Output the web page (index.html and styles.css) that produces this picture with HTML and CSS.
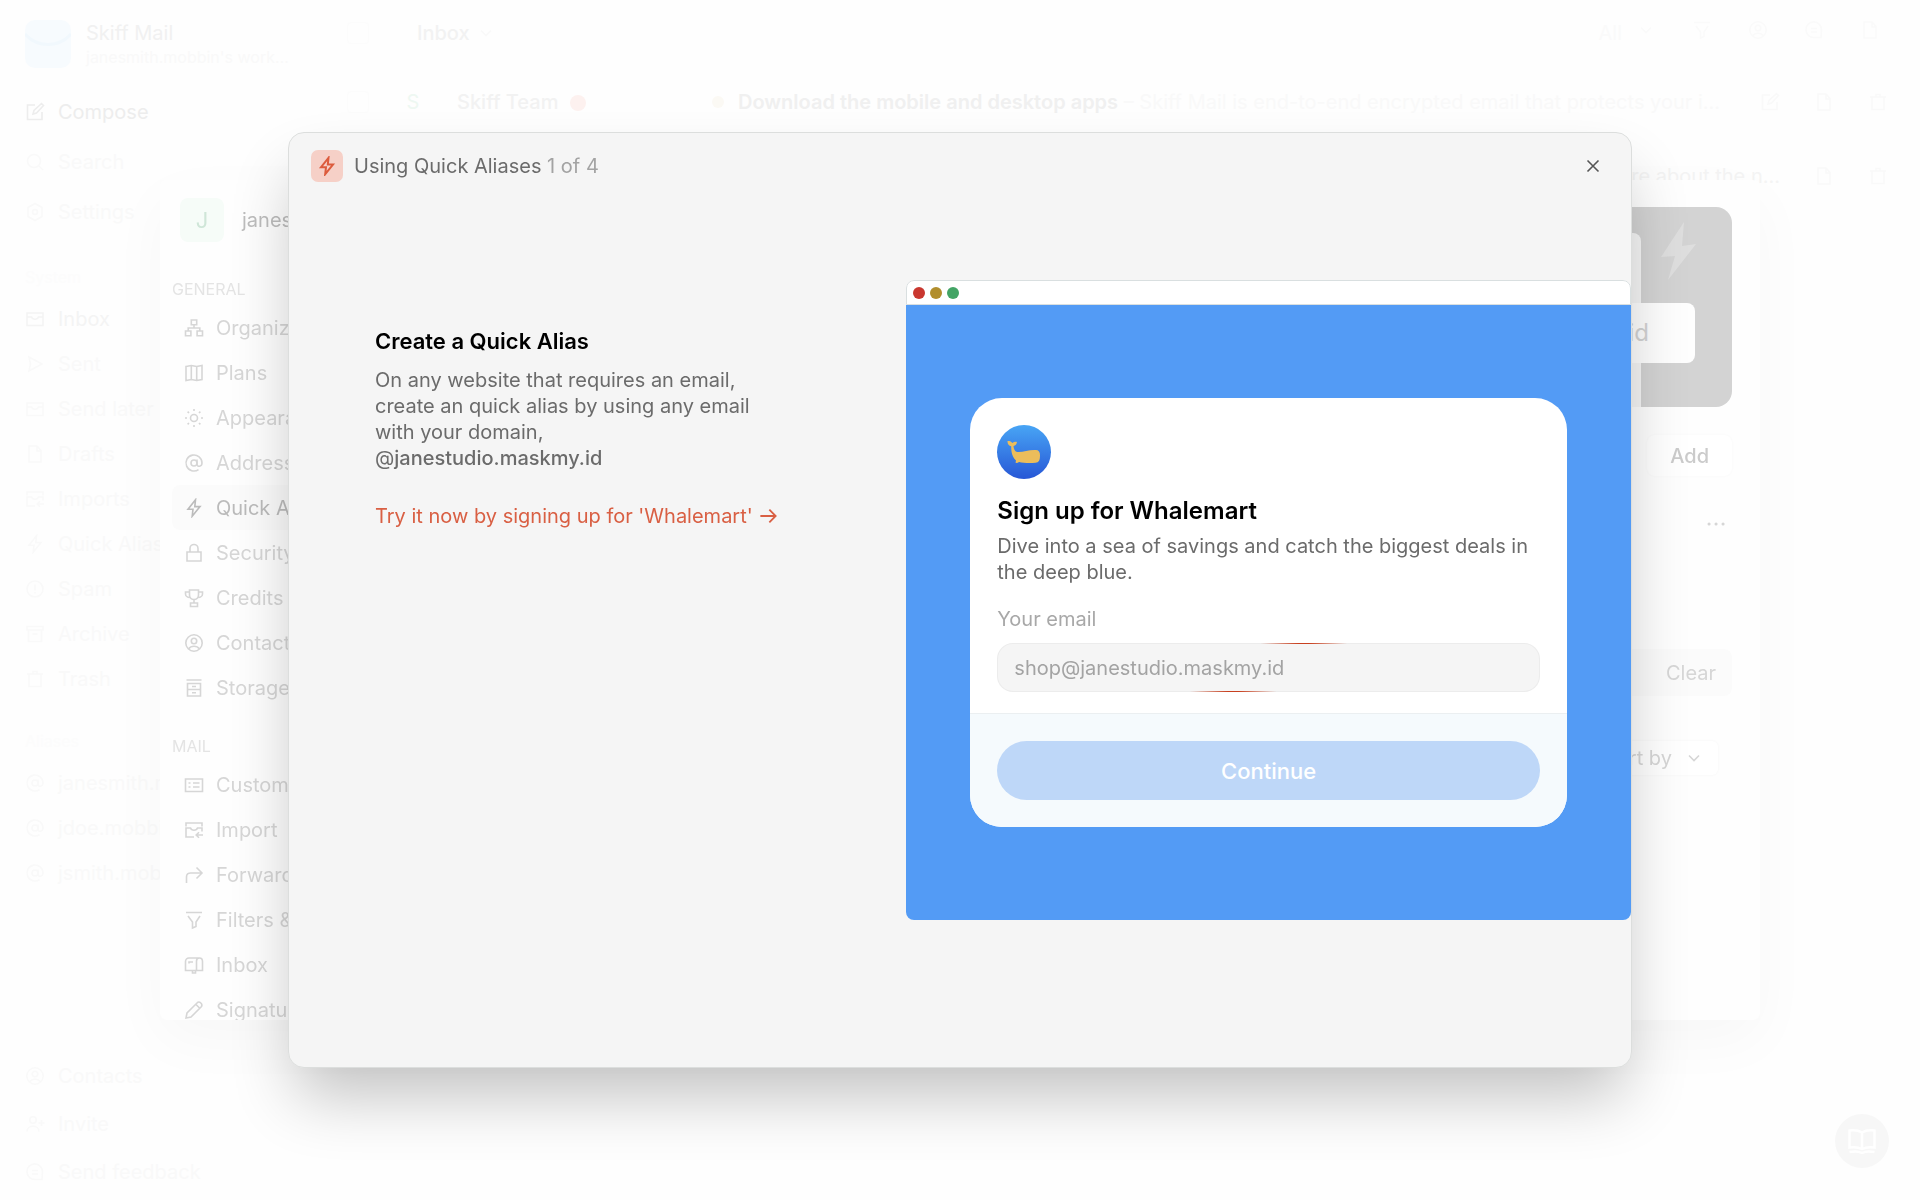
FILE: index.html
```html
<!DOCTYPE html>
<html lang="en">
<head>
    <meta charset="UTF-8">
    <meta name="viewport" content="width=device-width, initial-scale=1.0">
    <title>Skiff Mail</title>
    <link rel="stylesheet" href="styles.css">
</head>
<body>
    <!-- icon sprite -->
    <svg class="sprite" aria-hidden="true">
        <symbol id="i-bolt" viewBox="0 0 20 20"><path d="M11.500 1.800 4 11.200h5L8.200 18.200 16 8.600h-5.200z"/></symbol>
        <symbol id="i-compose" viewBox="0 0 20 20"><path d="M10 3H2.500v14.500H17V10M8 12l1-3.500 7.500-7 2 2-7 7.500z"/></symbol>
        <symbol id="i-search" viewBox="0 0 20 20"><circle cx="9" cy="9" r="6.500"/><path d="m14 14 4 4"/></symbol>
        <symbol id="i-gear" viewBox="0 0 20 20"><path d="m10 1.500 7 4v9l-7 4-7-4v-9z"/><circle cx="10" cy="10" r="2.500"/></symbol>
        <symbol id="i-inbox" viewBox="0 0 20 20"><path d="M2 7.500V4h16v3.500M2 8h4.500c1 3 6 3 7 0H18v8.500H2z"/></symbol>
        <symbol id="i-send" viewBox="0 0 20 20"><path d="m4 3 13 7-13 7 1.500-7z"/></symbol>
        <symbol id="i-file" viewBox="0 0 20 20"><path d="M4 2h8l4 4.500V18H4zM12 2v5h4"/></symbol>
        <symbol id="i-import" viewBox="0 0 20 20"><path d="M2 6.500V3h16v3.500M10 17H2V8h4.500c1 3 6 3 7 0H18v3.500M19 15h-6.500M15 12.200 12.200 15l2.800 2.800"/></symbol>
        <symbol id="i-spam" viewBox="0 0 20 20"><circle cx="10" cy="10" r="8"/><path d="M10 5.500v6M10 13v1.500"/></symbol>
        <symbol id="i-archive" viewBox="0 0 20 20"><path d="M2 2.500h16V6H2zM3.500 6v11.500h13V6M7.500 10h5"/></symbol>
        <symbol id="i-trash" viewBox="0 0 20 20"><path d="M2 5h16M4 5v12.500h12V5M8 5V2.500h4V5"/></symbol>
        <symbol id="i-at" viewBox="0 0 20 20"><circle cx="10" cy="10" r="3"/><path d="M13 6.500V11c0 3.200 5 3 5-1a8 8 0 1 0-3.500 6.600"/></symbol>
        <symbol id="i-user" viewBox="0 0 20 20"><circle cx="10" cy="10" r="8.200"/><circle cx="10" cy="8" r="2.700"/><path d="M4.500 16c2.500-3.600 8.500-3.600 11 0"/></symbol>
        <symbol id="i-invite" viewBox="0 0 20 20"><circle cx="8" cy="6" r="3.200"/><path d="M2 17.500c0-7 12-7 12 0M16.500 6v6M13.500 9h6"/></symbol>
        <symbol id="i-chat" viewBox="0 0 20 20"><path d="M17 17.500h-7A7.800 7.800 0 1 1 17.500 10zM7 8.500h6M7 12h6"/></symbol>
        <symbol id="i-org" viewBox="0 0 20 20"><path d="M7.300 2h5.400v4.800H7.300zM1.500 13h5.400v4.800H1.500zM13.100 13h5.400v4.800h-5.400zM10 7v3M4.200 13v-3h11.600v3"/></symbol>
        <symbol id="i-map" viewBox="0 0 20 20"><path d="m2 3.500 5.300-1 5.400 1 5.300-1v14l-5.300 1-5.400-1-5.300 1zM7.300 2.500v14M12.700 3.500v14"/></symbol>
        <symbol id="i-sun" viewBox="0 0 20 20"><circle cx="10" cy="10" r="3.500"/><path d="M10 1v2M10 17v2M1 10h2M17 10h2M3.600 3.600 5 5M15 15l1.400 1.400M3.600 16.400 5 15M15 5l1.400-1.400"/></symbol>
        <symbol id="i-lock" viewBox="0 0 20 20"><path d="M3 9h14v9H3zM6 9V5.500a4 4 0 0 1 8 0V9"/></symbol>
        <symbol id="i-trophy" viewBox="0 0 20 20"><path d="M5.500 2h9v5c0 6-9 6-9 0zM5.500 4H1.500v2c0 2 2 3.500 4.200 3.500M14.500 4h4v2c0 2-2 3.500-4.200 3.500M10 11.500V15M6.500 15h7v3.500h-7z"/></symbol>
        <symbol id="i-storage" viewBox="0 0 20 20"><path d="M2.500 2h15M3.500 5.500h13V18h-13zM3.500 11.500h13M8 8.500h4M8 14.800h4"/></symbol>
        <symbol id="i-domain" viewBox="0 0 20 20"><path d="M1.500 4h17v12.500h-17zM4.500 8h2M4.500 12h2M9 8h6.500M9 12h6.500"/></symbol>
        <symbol id="i-forward" viewBox="0 0 20 20"><path d="M2.500 18v-6c0-2.500 1.500-4 4-4h11M12.500 2.500 18 8l-5.500 5.500"/></symbol>
        <symbol id="i-filter" viewBox="0 0 20 20"><path d="M2 2.500h16M4 6l4.500 6v6l3.500-1.500V12L16 6"/></symbol>
        <symbol id="i-mailbox" viewBox="0 0 20 20"><path d="M5 3h10.500c2 0 3 1.500 3 3.500v9h-17v-9C1.500 4.500 3 3 5 3zM12.500 15.500V6c0-2 1-3 3-3M5 8.500V7h4M8.500 15.500V18h3v-2.500"/></symbol>
        <symbol id="i-pencil" viewBox="0 0 20 20"><path d="m2 18 1-5L13.500 2.500c2-1.500 5.500 1.500 4 4L7 17zM12 4.500l3.500 3.500"/></symbol>
        <symbol id="i-down" viewBox="0 0 20 20"><path d="m5 7.500 5 5 5-5"/></symbol>
        <symbol id="i-close" viewBox="0 0 20 20"><path d="m4.500 4.500 11 11M15.500 4.500l-11 11"/></symbol>
        <symbol id="i-arrow" viewBox="0 0 20 20"><path d="M1.500 10h17M11.500 3l7 7-7 7"/></symbol>
        <symbol id="i-dots" viewBox="0 0 20 20"><path d="M3 10h.1M10 10h.1M17 10h.1"/></symbol>
        <symbol id="i-book" viewBox="0 0 28 26"><path d="M14 4.500C10 2 6 2 1.500 2.500v17C6 19 10 19 14 21c4-2 8-2 12.500-1.500v-17C22 2 18 2 14 4.500zM14 4.500V20M1.500 24c5-1 9-1 12.500 1 3.500-2 7.500-2 12.500-1"/></symbol>
    </svg>

    <!-- mail app -->
    <div class="app">
        <aside class="sidebar">
            <div class="brand">
                <svg class="brand-logo" viewBox="0 0 46 48"><rect width="46" height="48" rx="10" fill="#f7fbfe"/><path d="M0 14c12 14 34 14 46 0" fill="none" stroke="#f1f8fd" stroke-width="3"/></svg>
                <div>
                    <div class="brand-name">Skiff Mail</div>
                    <div class="brand-sub">janesmith.mobbin's work…</div>
                </div>
            </div>
            <nav class="nav nav-top">
                <a href="#" class="compose"><svg class="icon"><use href="#i-compose"/></svg>Compose</a>
                <a href="#"><svg class="icon"><use href="#i-search"/></svg>Search</a>
                <a href="#"><svg class="icon"><use href="#i-gear"/></svg>Settings</a>
            </nav>
            <nav class="nav">
                <div class="nav-label">System</div>
                <a href="#" class="current"><svg class="icon"><use href="#i-inbox"/></svg>Inbox</a>
                <a href="#"><svg class="icon"><use href="#i-send"/></svg>Sent</a>
                <a href="#"><svg class="icon"><use href="#i-inbox"/></svg>Send later</a>
                <a href="#"><svg class="icon"><use href="#i-file"/></svg>Drafts</a>
                <a href="#"><svg class="icon"><use href="#i-import"/></svg>Imports</a>
                <a href="#"><svg class="icon"><use href="#i-bolt"/></svg>Quick Aliases</a>
                <a href="#"><svg class="icon"><use href="#i-spam"/></svg>Spam</a>
                <a href="#"><svg class="icon"><use href="#i-archive"/></svg>Archive</a>
                <a href="#"><svg class="icon"><use href="#i-trash"/></svg>Trash</a>
            </nav>
            <nav class="nav">
                <div class="nav-label">Aliases</div>
                <a href="#"><svg class="icon"><use href="#i-at"/></svg>janesmith.mobbin</a>
                <a href="#"><svg class="icon"><use href="#i-at"/></svg>jdoe.mobbin</a>
                <a href="#"><svg class="icon"><use href="#i-at"/></svg>jsmith.mobbin</a>
            </nav>
            <nav class="nav nav-bottom">
                <a href="#"><svg class="icon"><use href="#i-user"/></svg>Contacts</a>
                <a href="#"><svg class="icon"><use href="#i-invite"/></svg>Invite</a>
                <a href="#"><svg class="icon"><use href="#i-chat"/></svg>Send feedback</a>
            </nav>
        </aside>

        <main class="mail">
            <header class="mail-head">
                <input type="checkbox" class="check" aria-label="Select all">
                <h1>Inbox</h1>
                <svg class="icon"><use href="#i-down"/></svg>
                <div class="mail-tools">
                    <span>All</span>
                    <svg class="icon"><use href="#i-down"/></svg>
                    <svg class="icon"><use href="#i-filter"/></svg>
                    <svg class="icon"><use href="#i-user"/></svg>
                    <svg class="icon"><use href="#i-chat"/></svg>
                    <svg class="icon"><use href="#i-file"/></svg>
                </div>
            </header>
            <div class="mail-row">
                <input type="checkbox" class="check" aria-label="Select thread">
                <span class="mail-avatar">S</span>
                <span class="mail-from">Skiff Team <i class="badge"></i></span>
                <i class="unread"></i>
                <span class="mail-subject"><b>Download the mobile and desktop apps</b> – Skiff Mail is end-to-end encrypted email that protects your inbox and private data</span>
                <svg class="icon"><use href="#i-compose"/></svg>
                <svg class="icon"><use href="#i-file"/></svg>
                <svg class="icon"><use href="#i-trash"/></svg>
            </div>
            <div class="mail-row">
                <span class="mail-subject short">more about the n…</span>
                <svg class="icon"><use href="#i-file"/></svg>
                <svg class="icon"><use href="#i-trash"/></svg>
            </div>
        </main>
    </div>

    <!-- settings -->
    <div class="settings">
        <aside class="settings-side">
            <div class="profile"><span class="avatar">J</span>janesmith</div>
            <div class="group">General</div>
            <a href="#"><svg class="icon"><use href="#i-org"/></svg>Organization</a>
            <a href="#"><svg class="icon"><use href="#i-map"/></svg>Plans</a>
            <a href="#"><svg class="icon"><use href="#i-sun"/></svg>Appearance</a>
            <a href="#"><svg class="icon"><use href="#i-at"/></svg>Addresses</a>
            <a href="#" class="active"><svg class="icon"><use href="#i-bolt"/></svg>Quick Aliases</a>
            <a href="#"><svg class="icon"><use href="#i-lock"/></svg>Security</a>
            <a href="#"><svg class="icon"><use href="#i-trophy"/></svg>Credits</a>
            <a href="#"><svg class="icon"><use href="#i-user"/></svg>Contacts</a>
            <a href="#"><svg class="icon"><use href="#i-storage"/></svg>Storage</a>
            <div class="group">Mail</div>
            <a href="#"><svg class="icon"><use href="#i-domain"/></svg>Custom domains</a>
            <a href="#"><svg class="icon"><use href="#i-import"/></svg>Import</a>
            <a href="#"><svg class="icon"><use href="#i-forward"/></svg>Forward</a>
            <a href="#"><svg class="icon"><use href="#i-filter"/></svg>Filters &amp; rules</a>
            <a href="#"><svg class="icon"><use href="#i-mailbox"/></svg>Inbox</a>
            <a href="#"><svg class="icon"><use href="#i-pencil"/></svg>Signature</a>
        </aside>
        <section class="settings-main">
            <div class="banner">
                <div class="banner-panel"></div>
                <div class="banner-pill">maskmy.id</div>
                <svg class="banner-bolt" viewBox="0 0 36 58"><path d="M23 0 0 35l14-1-7 24 28-36-14 2z"/></svg>
            </div>
            <button type="button" class="add">Add</button>
            <button type="button" class="more" aria-label="More"><svg class="icon"><use href="#i-dots"/></svg></button>
            <div class="searchbar">
                <input type="text" aria-label="Search aliases">
                <button type="button">Clear</button>
            </div>
            <div class="sort">
                <select aria-label="Sort"><option>Sort by</option></select>
                <svg class="icon"><use href="#i-down"/></svg>
            </div>
        </section>
    </div>

    <button type="button" class="help" aria-label="Help"><svg><use href="#i-book"/></svg></button>

    <!-- quick alias walkthrough -->
    <div class="modal" role="dialog" aria-labelledby="modal-title">
        <header class="modal-head">
            <span class="modal-icon"><svg class="icon"><use href="#i-bolt"/></svg></span>
            <div id="modal-title">Using Quick Aliases <span class="step">1 of 4</span></div>
            <button type="button" class="close" aria-label="Close"><svg class="icon"><use href="#i-close"/></svg></button>
        </header>
        <div class="modal-body">
            <section class="intro">
                <h2>Create a Quick Alias</h2>
                <p>On any website that requires an email, create an quick alias by using any email with your domain,<br><span>@</span><b>janestudio.maskmy.id</b></p>
                <a href="#" class="try">Try it now by signing up for 'Whalemart'<svg class="icon"><use href="#i-arrow"/></svg></a>
            </section>
            <section class="browser">
                <div class="browser-bar">
                    <i class="dot red"></i><i class="dot yellow"></i><i class="dot green"></i>
                </div>
                <div class="browser-page">
                    <form class="card">
                        <div class="card-main">
                            <svg class="whale" viewBox="0 0 54 54">
                                <defs>
                                    <linearGradient id="sea" x1="0" y1="0" x2="0" y2="1"><stop offset="0" stop-color="#48a5f5"/><stop offset="1" stop-color="#2757d6"/></linearGradient>
                                </defs>
                                <circle cx="27" cy="27" r="27" fill="url(#sea)"/>
                                <path fill="#ecbd5b" d="M10.500 16c2-.2 3.800.4 5 2 1.200-1.200 2.800-1.500 4.500-1-.3 2.300-1.500 3.600-3.500 4 .2 2.800 1.200 5.500 3.500 6 6 .5 12-2.500 19-2 3 .2 4 2.200 4 5.500 0 4.500-1 7-4.500 7.300-6 .6-12.500.2-16.500-.8-1 .8-2.300 1.200-3.500.8l.5-2.300c-3.500-3-4.800-7.500-4.800-14.200-2.300-.6-3.900-2.600-3.700-5.300z"/>
                            </svg>
                            <h3>Sign up for Whalemart</h3>
                            <p>Dive into a sea of savings and catch the biggest deals in the deep blue.</p>
                            <label for="email">Your email</label>
                            <div class="field">
                                <input type="text" id="email" value="shop@janestudio.maskmy.id">
                            </div>
                        </div>
                        <div class="card-foot">
                            <button type="button">Continue</button>
                        </div>
                    </form>
                </div>
            </section>
        </div>
    </div>
</body>
</html>
```

FILE: styles.css
```css
* {
    box-sizing: border-box;
}
body {
    margin: 0;
    height: 100vh;
    overflow: hidden;
    background: #fefefe;
    font-family: Inter, "Liberation Sans", sans-serif;
    font-size: 20px;
    line-height: 26px;
}
a {
    color: inherit;
    text-decoration: none;
}
h1, h2, h3, p {
    margin: 0;
}
button, input, select {
    padding: 0;
    border: none;
    background: none;
    color: inherit;
    font: inherit;
}
.sprite {
    position: absolute;
    width: 0;
    height: 0;
}
.icon {
    flex: none;
    width: 20px;
    height: 20px;
    fill: none;
    stroke: currentColor;
    stroke-width: 1.6;
}

/* mail app */
.app {
    display: flex;
    height: 100vh;
    color: #f9f9f9;
}
.sidebar {
    display: flex;
    flex-direction: column;
    width: 320px;
    padding: 20px 0 4px 25px;
}
.brand {
    display: flex;
    gap: 15px;
    height: 67px;
}
.brand-logo {
    width: 46px;
    height: 48px;
}
.brand-name {
    color: #f1f1f1;
}
.brand-sub {
    font-size: 16px;
    line-height: 22px;
}
.nav a {
    display: flex;
    align-items: center;
    gap: 13px;
    height: 45px;
}
.nav-top a {
    height: 50px;
}
.nav .compose {
    color: #ededed;
}
.nav .current {
    color: #f4f4f4;
}
.nav-label {
    height: 20px;
    margin-top: 30px;
    margin-bottom: 9px;
    color: #fcfcfc;
    font-size: 16px;
    line-height: 20px;
}
.nav-bottom {
    margin-top: auto;
}
.nav-bottom a {
    height: 48px;
}
.mail {
    flex: 1;
    min-width: 0;
}
.mail-head {
    display: flex;
    align-items: center;
    height: 65px;
    padding: 0 40px 0 27px;
}
.mail-head h1 {
    margin: 0 6px 0 48px;
    color: #f2f2f2;
    font-size: 20px;
    font-weight: 500;
}
.mail-tools {
    display: flex;
    gap: 36px;
    margin-left: auto;
    color: #fafafa;
}
.mail-tools span {
    margin-right: -22px;
}
.mail-row {
    display: flex;
    align-items: center;
    gap: 28px;
    height: 74px;
    padding: 0 32px 0 27px;
}
.mail-row .icon {
    margin-left: 6px;
}
.check {
    appearance: none;
    flex: none;
    width: 22px;
    height: 22px;
    margin: 0;
    border: 1px solid #fcfcfc;
    border-radius: 4px;
}
.mail-avatar {
    width: 32px;
    color: #eef8f2;
    text-align: center;
}
.mail-from {
    width: 227px;
    color: #f2f2f2;
    font-weight: 500;
}
.badge {
    display: inline-block;
    width: 16px;
    height: 16px;
    margin-left: 6px;
    border-radius: 50%;
    background: #fdf1ef;
    vertical-align: -2px;
}
.unread {
    flex: none;
    width: 12px;
    height: 12px;
    margin-right: -14px;
    border-radius: 50%;
    background: #fbf9f4;
}
.mail-subject {
    flex: 1;
    overflow: hidden;
    text-overflow: ellipsis;
    white-space: nowrap;
}
.mail-subject b {
    color: #f0f0f0;
    font-weight: 600;
}
.mail-subject.short {
    color: #f4f4f4;
    text-align: right;
}

/* settings */
.settings {
    position: fixed;
    inset: 15vh 8.333vw;
    display: flex;
    overflow: hidden;
    border-radius: 8px;
    background: #fefefe;
    box-shadow: 0 20px 60px rgba(0, 0, 0, 0.03);
    color: #d6d6d6;
}
.settings-side {
    width: 290px;
    padding: 18px 12px 0;
}
.profile {
    display: flex;
    align-items: center;
    gap: 18px;
    height: 44px;
    margin-bottom: 37px;
    padding-left: 8px;
    color: #bdbdbd;
}
.avatar {
    width: 44px;
    border-radius: 8px;
    background: #f6fcf8;
    color: #cfe6d8;
    font-size: 22px;
    line-height: 44px;
    text-align: center;
}
.group {
    height: 20px;
    margin: 26px 0 6px;
    color: #e4e4e4;
    font-size: 16px;
    line-height: 20px;
    text-transform: uppercase;
}
.settings-side a {
    display: flex;
    align-items: center;
    gap: 12px;
    height: 45px;
    padding-left: 12px;
    border-radius: 8px;
}
.settings-side .active {
    background: #fbfbfb;
    color: #bbb;
}
.settings-main {
    display: flex;
    flex: 1;
    flex-direction: column;
    align-items: flex-end;
    padding: 27px 28px 0 0;
}
.banner {
    position: relative;
    width: 100%;
    height: 200px;
    margin-bottom: 28px;
    overflow: hidden;
    border-radius: 16px;
    background: #d3d3d3;
}
.banner-panel {
    position: absolute;
    top: 26px;
    right: 91px;
    bottom: 0;
    width: 600px;
    border-radius: 8px 8px 0 0;
    background: #f6f6f6;
}
.banner-pill {
    position: absolute;
    top: 96px;
    right: 37px;
    width: 400px;
    height: 60px;
    padding-right: 46px;
    border-radius: 8px;
    background: #fefefe;
    color: #d3d3d3;
    font-size: 24px;
    line-height: 60px;
    text-align: right;
}
.banner-bolt {
    position: absolute;
    top: 15px;
    right: 35px;
    width: 36px;
    height: 58px;
    fill: #dedede;
}
.add {
    height: 41px;
    padding: 0 23px;
    border-radius: 8px;
    background: #fff;
    box-shadow: 0 0 3px rgba(0, 0, 0, 0.03);
    color: #cbcbcb;
    font-weight: 500;
}
.more {
    display: flex;
    margin: 38px 6px 115px 0;
}
.more .icon {
    stroke-linecap: round;
    stroke-width: 3;
}
.searchbar {
    display: flex;
    width: 100%;
    height: 47px;
    padding: 0 16px;
    border-radius: 8px;
    background: #fbfbfb;
}
.searchbar input {
    flex: 1;
}
.sort {
    display: flex;
    align-items: center;
    gap: 12px;
    height: 34px;
    margin: 45px 14px 0 0;
    padding: 0 14px;
    border-radius: 6px;
    background: #fff;
    box-shadow: 0 0 3px rgba(0, 0, 0, 0.04);
}
.sort select {
    appearance: none;
}
.help {
    position: fixed;
    right: 31px;
    bottom: 32px;
    display: flex;
    align-items: center;
    justify-content: center;
    width: 54px;
    height: 54px;
    border-radius: 50%;
    background: #f7f7f7;
}
.help svg {
    width: 28px;
    height: 26px;
    fill: none;
    stroke: #fff;
    stroke-width: 2.5;
}

/* walkthrough modal */
.modal {
    position: fixed;
    inset: 11vh 15vw;
    display: flex;
    flex-direction: column;
    border: 1px solid #dcdedd;
    border-radius: 16px;
    background: #f5f5f5;
    box-shadow: 0 36px 64px -8px rgba(0, 0, 0, 0.24);
    color: #6b6b6b;
}
.modal-head {
    display: flex;
    align-items: center;
    gap: 11px;
    height: 65px;
    padding: 0 28px 0 22px;
}
.modal-icon {
    display: flex;
    align-items: center;
    justify-content: center;
    width: 32px;
    height: 32px;
    border-radius: 7px;
    background: #f6d0c7;
    color: #dc5b3c;
}
.modal-icon .icon {
    stroke-width: 2;
}
.step {
    color: #a3a3a3;
}
.close {
    display: flex;
    margin-left: auto;
    color: #555;
}
.modal-body {
    display: flex;
    flex: 1;
    padding: 82px 0 147px;
}
.intro {
    flex: 1;
    padding: 47px 0 0 86px;
}
.intro h2 {
    margin-bottom: 12px;
    color: #000;
    font-size: 22px;
    font-weight: 600;
    line-height: 28px;
}
.intro p {
    max-width: 384px;
    margin-bottom: 32px;
}
.intro b {
    font-weight: 500;
}
.try {
    display: flex;
    align-items: center;
    gap: 6px;
    color: #d95f43;
}
.try .icon {
    width: 18px;
    height: 18px;
    stroke-width: 2;
}
.browser {
    display: flex;
    flex-direction: column;
    width: 54%;
    overflow: hidden;
    border-radius: 8px;
}
.browser-bar {
    display: flex;
    align-items: center;
    gap: 5px;
    height: 25px;
    padding-left: 6px;
    border: 1px solid #d9dfe0;
    border-radius: 8px 8px 0 0;
    background: #fff;
}
.dot {
    width: 12px;
    height: 12px;
    border-radius: 50%;
}
.red {
    background: #c9372f;
}
.yellow {
    background: #b18e2d;
}
.green {
    background: #43a465;
}
.browser-page {
    display: flex;
    flex: 1;
    align-items: center;
    padding: 0 64px;
    background: #539bf5;
}
.card {
    flex: 1;
    overflow: hidden;
    border-radius: 32px;
    background: #fff;
}
.card-main {
    padding: 27px 27px 21px;
}
.whale {
    display: block;
    width: 54px;
    height: 54px;
    margin-bottom: 16px;
}
.card h3 {
    margin-bottom: 6px;
    color: #000;
    font-size: 24px;
    font-weight: 600;
    line-height: 32px;
}
.card p {
    margin-bottom: 21px;
}
.card label {
    display: block;
    margin-bottom: 11px;
    color: #a8a8a8;
}
.field {
    height: 49px;
    padding: 1px;
    border-radius: 16px;
    background:
        radial-gradient(ellipse 44px 3px at 56.5% 0, #c8401f 20%, transparent) no-repeat,
        radial-gradient(ellipse 44px 3px at 43.5% 100%, #c8401f 20%, transparent) no-repeat,
        #ececec;
}
.field input {
    display: block;
    width: 100%;
    height: 47px;
    padding: 0 16px;
    border-radius: 15px;
    background: #f5f5f5;
    color: #a3a3a3;
}
.card-foot {
    padding: 27px;
    border-top: 1px solid #ebeff1;
    background: #f5fafd;
}
.card-foot button {
    width: 100%;
    height: 59px;
    border-radius: 30px;
    background: #bed7f8;
    color: #fff;
    font-size: 22px;
    font-weight: 500;
}
```
